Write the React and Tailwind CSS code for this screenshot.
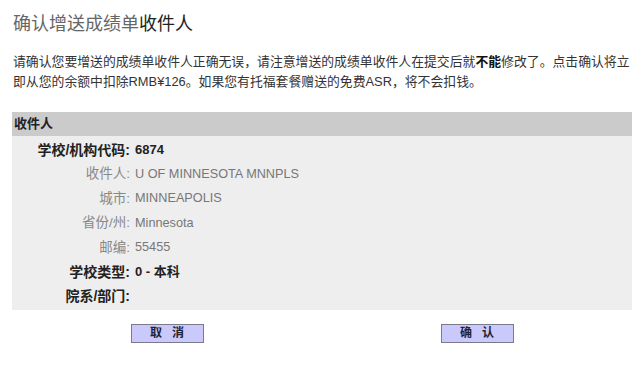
import React from "react";

const rows = [
  { label: "学校/机构代码:", value: "6874", bold: true },
  { label: "收件人:", value: "U OF MINNESOTA MNNPLS", bold: false },
  { label: "城市:", value: "MINNEAPOLIS", bold: false },
  { label: "省份/州:", value: "Minnesota", bold: false },
  { label: "邮编:", value: "55455", bold: false },
  { label: "学校类型:", value: "0 - 本科", bold: true },
  { label: "院系/部门:", value: "", bold: true },
];

export default function App() {
  return (
    <div
      className="w-[640px] h-[391px] bg-white overflow-hidden"
      style={{ fontFamily: '"Liberation Sans", "Noto Sans CJK SC", sans-serif' }}
    >
      <div className="pt-[12px] pl-[13px] text-[18px] leading-[24px]">
        <span className="text-[#666]">确认增送成绩单</span>
        <span className="text-[#222]">收件人</span>
      </div>
      <div className="mt-[16px] pl-[13px] text-[12.85px] leading-[20px] text-[#333] whitespace-nowrap">
        请确认您要增送的成绩单收件人正确无误，请注意增送的成绩单收件人在提交后就<b className="text-[#111]">不能</b>修改了。点击确认将立
        <br />
        即从您的余额中扣除RMB¥126。如果您有托福套餐赠送的免费ASR，将不会扣钱。
      </div>
      <div className="mt-[20px] ml-[12px] w-[620px]">
        <div className="h-[24px] bg-[#cbcbcb] pl-[2px] flex items-center text-[13px] font-bold text-[#222]">
          收件人
        </div>
        <div className="bg-[#eeeeee] pt-[2px] pb-[1px]">
          {rows.map((r) => (
            <div key={r.label} className="flex h-[24.4px] items-center">
              <div
                className={
                  r.bold
                    ? "w-[118px] text-right text-[14px] font-bold text-[#222]"
                    : "w-[118px] text-right text-[13.5px] text-[#888]"
                }
              >
                {r.label}
              </div>
              <div
                className={
                  r.bold
                    ? "pl-[5px] text-[13px] font-bold text-[#222]"
                    : "pl-[5px] text-[12.7px] text-[#777]"
                }
              >
                {r.value}
              </div>
            </div>
          ))}
        </div>
        <div className="flex mt-[14px]">
          <div className="flex-1 flex justify-center">
            <button className="w-[73px] h-[19px] bg-[#c9c9fb] border border-[#7a7a8a] text-[12px] font-bold text-[#223] leading-none tracking-[10px] pl-[10px]">
              取消
            </button>
          </div>
          <div className="flex-1 flex justify-center">
            <button className="w-[73px] h-[19px] bg-[#c9c9fb] border border-[#7a7a8a] text-[12px] font-bold text-[#223] leading-none tracking-[10px] pl-[10px]">
              确认
            </button>
          </div>
        </div>
      </div>
    </div>
  );
}
